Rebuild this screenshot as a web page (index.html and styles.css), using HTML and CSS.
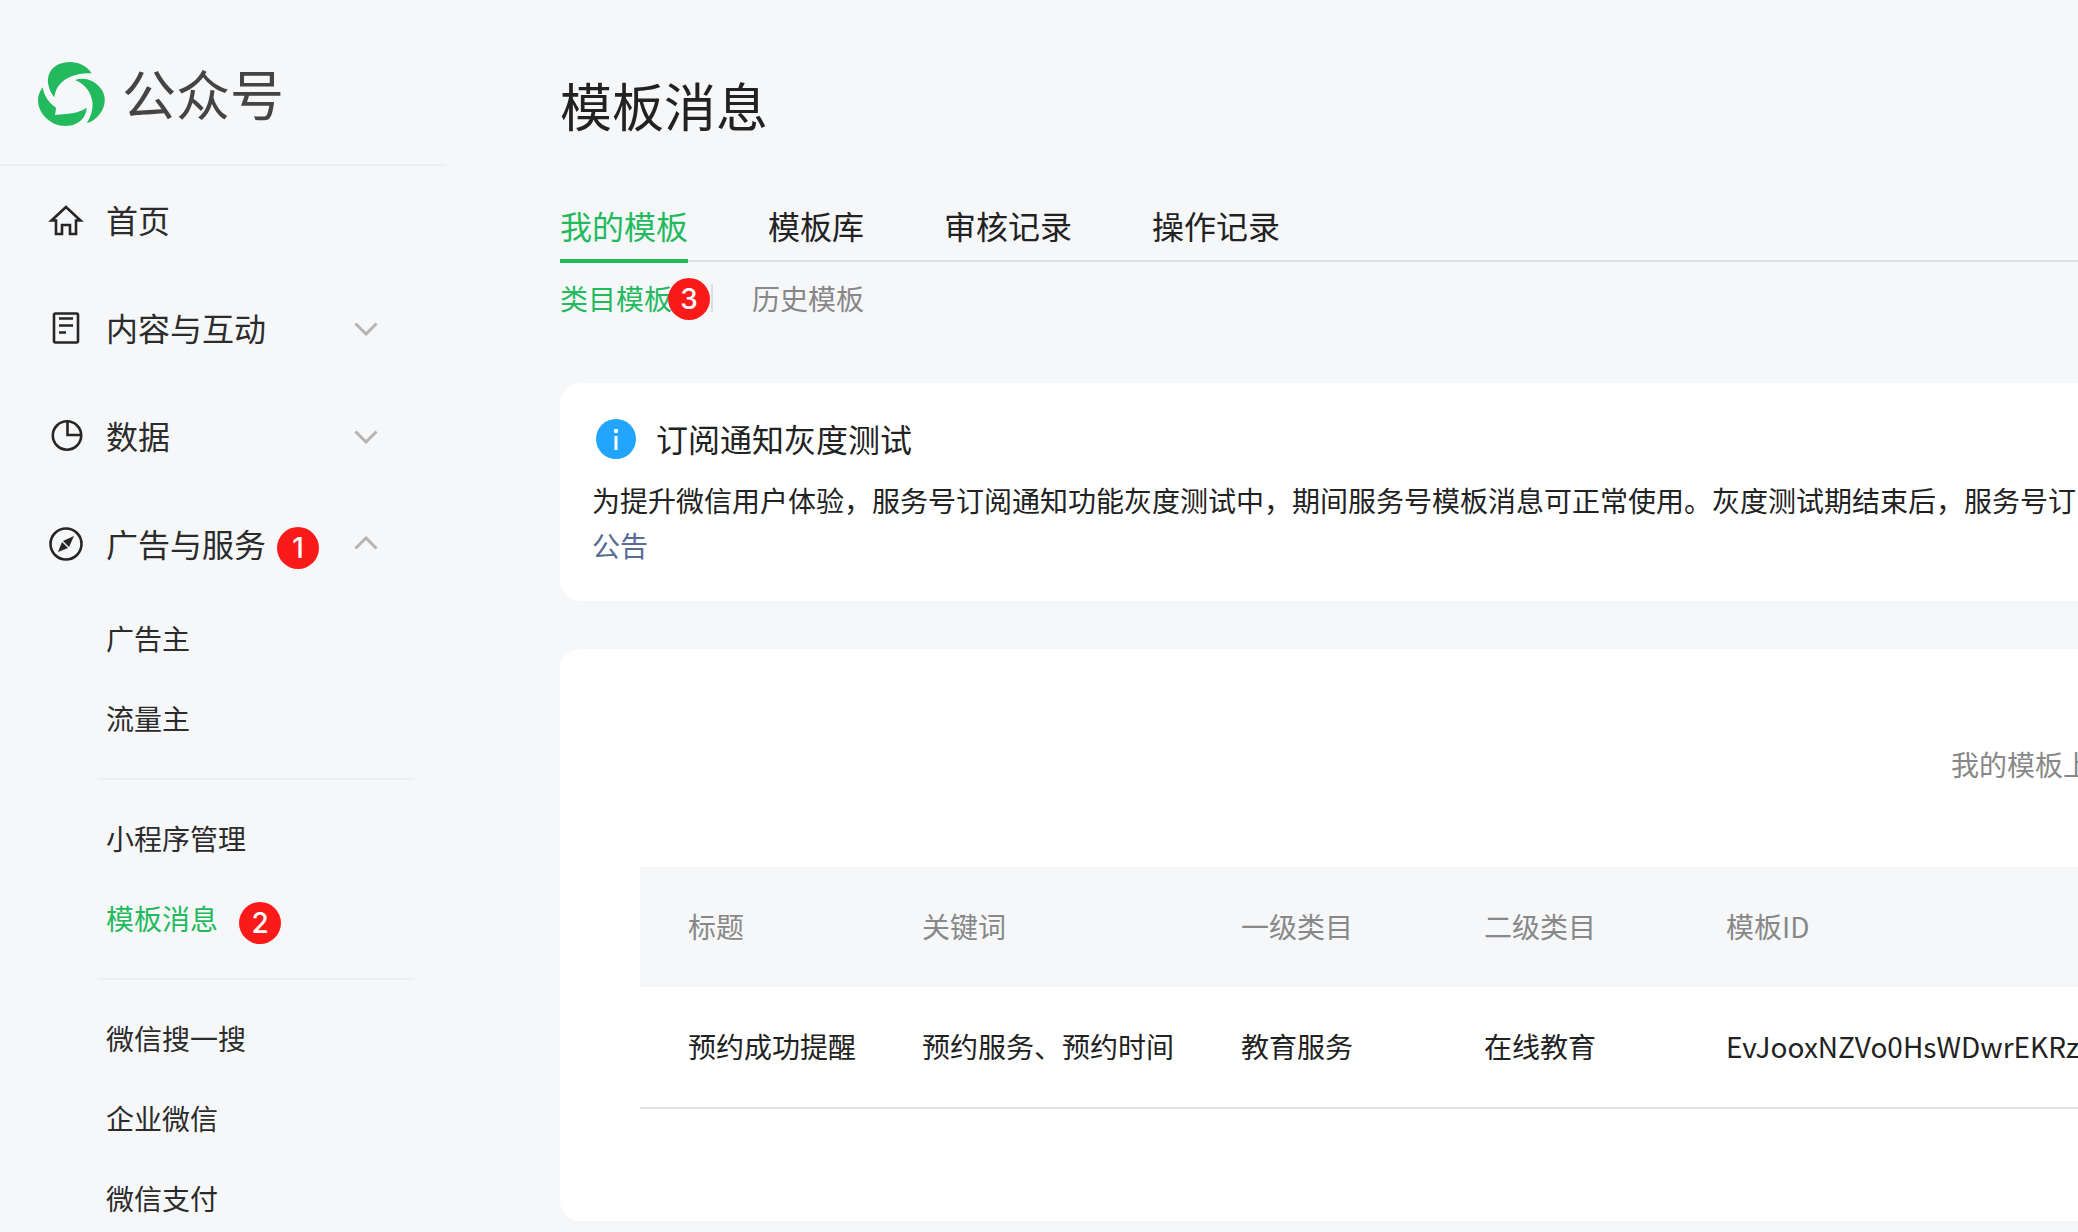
FILE: index.html
```html
<!DOCTYPE html>
<html lang="zh-CN">
<head>
<meta charset="utf-8">
<title>模板消息</title>
<link rel="stylesheet" href="styles.css">
</head>
<body>
<div class="app">
  <aside class="sidebar">
    <div class="brand">
      <svg class="logo" viewBox="0 0 67 64">
        <path d="M53.7 11.3C48.5 3.5 40 0 32 0C23.5 0 15.5 3.5 12 10C8 17.5 10 27.5 16.3 35.3C17 29.5 19 25 23 21C28.5 15.5 39 10.5 53.7 11.3Z"/>
        <path d="M37 18C43.5 15.5 51 16.5 56.5 20.5C63 25 66.8 31 66.8 38C66.8 48.5 58.5 58.5 48.7 61.3C52.5 55 55 48 54.5 41C53.8 31.5 47.5 22 37 18Z"/>
        <path d="M4.7 25.3C1.5 29.5 0 33.5 0 38C0 45 3 51 8 56C13 61 20 64 27 64C35 64 42 60.5 45.5 55.5C47.5 52.5 48.5 49 48.7 45.7C44.5 48.5 39.5 50.5 34 51.3C28 52.2 22.5 52.5 17 53C17.5 50.5 18 48 18 45.7C11 41 6 34 4.7 25.3Z"/>
      </svg>
      <span class="brand-name">公众号</span>
    </div>
    <nav class="nav">
      <div class="nav-row">
        <svg class="nav-icon" viewBox="0 0 40 40"><path d="M20 6L5.5 19.5H10V33H16V24H24V33H30V19.5H34.5Z"/></svg>
        <span class="nav-label">首页</span>
      </div>
      <div class="nav-row">
        <svg class="nav-icon" viewBox="0 0 40 40"><rect x="8" y="4.5" width="24" height="29" rx="1.5"/><path d="M13 9.5H27M13 16.5H27M13 23.5H20"/></svg>
        <span class="nav-label">内容与互动</span>
        <svg class="chevron" viewBox="0 0 24 14"><path d="M1.5 1.5L12 12L22.5 1.5"/></svg>
      </div>
      <div class="nav-row">
        <svg class="nav-icon" viewBox="0 0 40 40"><circle cx="21" cy="18.5" r="14.2"/><path d="M21.5 4V18H36"/></svg>
        <span class="nav-label">数据</span>
        <svg class="chevron" viewBox="0 0 24 14"><path d="M1.5 1.5L12 12L22.5 1.5"/></svg>
      </div>
      <div class="nav-row">
        <svg class="nav-icon" viewBox="0 0 40 40"><circle cx="20" cy="19" r="15.5"/><path class="needle" d="M28 11L17 16L23 22Z"/><path class="needle" d="M12 27L16 17L22 23Z"/></svg>
        <span class="nav-label">广告与服务</span>
        <span class="badge badge-nav">1</span>
        <svg class="chevron chevron-up" viewBox="0 0 24 14"><path d="M1.5 12.5L12 2L22.5 12.5"/></svg>
      </div>
      <div class="sub-group first">
        <div class="sub-item">广告主</div>
        <div class="sub-item">流量主</div>
      </div>
      <div class="sub-group">
        <div class="sub-item">小程序管理</div>
        <div class="sub-item active">模板消息<span class="badge badge-sub">2</span></div>
      </div>
      <div class="sub-group last">
        <div class="sub-item">微信搜一搜</div>
        <div class="sub-item">企业微信</div>
        <div class="sub-item">微信支付</div>
      </div>
    </nav>
  </aside>
  <main class="main">
    <h1 class="page-title">模板消息</h1>
    <div class="tabs">
      <div class="tab active">我的模板</div>
      <div class="tab">模板库</div>
      <div class="tab">审核记录</div>
      <div class="tab">操作记录</div>
    </div>
    <div class="subtabs">
      <div class="subtab active">类目模板<span class="badge badge-tab">3</span></div>
      <div class="subtab">历史模板</div>
    </div>
    <section class="card notice">
      <div class="notice-head">
        <svg class="info" viewBox="0 0 40 40"><circle cx="20" cy="20" r="20"/><circle class="info-mark" cx="20" cy="12" r="2.2"/><rect class="info-mark" x="18.5" y="17" width="3" height="14"/></svg>
        <span class="notice-title">订阅通知灰度测试</span>
      </div>
      <p class="notice-text">为提升微信用户体验，服务号订阅通知功能灰度测试中，期间服务号模板消息可正常使用。灰度测试期结束后，服务号订阅通知将全面开放</p>
      <a class="notice-link">公告</a>
    </section>
    <section class="card list">
      <p class="quota">我的模板上限25个</p>
      <div class="table">
        <div class="tr th">
          <div>标题</div><div>关键词</div><div>一级类目</div><div>二级类目</div><div>模板ID</div>
        </div>
        <div class="tr td">
          <div>预约成功提醒</div><div>预约服务、预约时间</div><div>教育服务</div><div>在线教育</div><div>EvJooxNZVo0HsWDwrEKRz</div>
        </div>
      </div>
    </section>
  </main>
</div>
</body>
</html>
```

FILE: styles.css
```css
* { box-sizing: border-box; }
html, body { margin: 0; padding: 0; height: 100%; overflow: hidden; }
body {
  background: #f6f7f9;
  color: #222;
  font-family: "Noto Sans CJK SC", "Inter", sans-serif;
  font-weight: 400;
}
.app { display: flex; width: 2078px; height: 1232px; overflow: hidden; }

/* sidebar */
.sidebar { width: 446px; flex: none; margin-right: 114px; }
.brand {
  display: flex; align-items: center; height: 166px; padding: 24px 0 0 38px;
  border-bottom: 2px solid #eeeff1;
}
.logo { width: 67px; height: 64px; fill: #23ba5d; flex: none; }
.brand-name { margin-left: 17px; padding-bottom: 3px; font-size: 54px; line-height: 64px; color: #444; }

.nav { padding-top: 1px; }
.nav-row {
  display: flex; align-items: center; height: 108px; padding: 0 68px 0 46px;
  font-size: 32px; color: #2b2b2b;
}
.nav-label { padding-bottom: 5px; }
.nav-icon {
  width: 40px; height: 40px; margin-right: 20px; flex: none;
  fill: none; stroke: #262626; stroke-width: 2.6;
}
.needle { fill: #262626; stroke: none; }
.chevron { width: 24px; height: 14px; margin-left: auto; fill: none; stroke: #b4b4b4; stroke-width: 3; flex: none; }
.chevron-up { margin-bottom: 5px; }

.badge {
  display: flex; align-items: center; justify-content: center;
  width: 42px; height: 42px; border-radius: 50%;
  background: #fb1a1a; color: #fff;
  font-family: "Inter", sans-serif; font-weight: 500; font-size: 28px; line-height: 1;
  flex: none;
}
.badge-nav { margin: 6px 0 0 11px; }
.sub-group { margin-left: 98px; width: 316px; padding: 19px 0; border-bottom: 2px solid #eeeff1; }
.sub-group.first { padding-top: 0; }
.sub-group.last { border-bottom: 0; }
.sub-item {
  display: flex; align-items: center; height: 80px; margin-left: 8px; padding-bottom: 2px;
  font-size: 28px; color: #2b2b2b;
}
.sub-item.active { color: #23ba5d; }
.badge-sub { margin: 10px 0 0 21px; }

/* main */
.main { width: 1700px; flex: none; }
.page-title { margin: 0; padding-top: 69px; font-size: 52px; line-height: 72px; font-weight: 400; color: #222; }
.tabs { display: flex; gap: 80px; margin-top: 61px; height: 60px; border-bottom: 2px solid #dedfe2; }
.tab { font-size: 32px; line-height: 46px; height: 61px; color: #222; }
.tab.active { color: #23ba5d; border-bottom: 4px solid #23ba5d; }
.subtabs { display: flex; align-items: center; height: 72px; font-size: 28px; color: #888; }
.subtab { position: relative; line-height: 28px; }
.subtab.active { color: #23ba5d; padding-right: 39px; margin-right: 39px; border-right: 2px solid #dedfe2; }
.badge-tab { position: absolute; left: 108px; top: -6px; }

.card { background: #fff; border-radius: 20px; box-shadow: 0 2px 12px rgba(0, 0, 0, 0.012); }
.notice { margin-top: 49px; height: 218px; padding: 36px 0 0 32px; }
.notice-head { display: flex; align-items: center; gap: 20px; margin-left: 4px; height: 40px; font-size: 32px; color: #222; }
.notice-title { padding-bottom: 3px; }
.info { width: 40px; height: 40px; fill: #22a5ff; flex: none; }
.info-mark { fill: #fff; }
.notice-text { margin: 19px 0 0; font-size: 28px; line-height: 45px; white-space: nowrap; color: #222; }
.notice-link { display: block; font-size: 28px; line-height: 45px; color: #576b95; }

.list { margin-top: 48px; height: 572px; padding-top: 95px; }
.quota { margin: 0 0 83px 1391px; font-size: 28px; line-height: 40px; color: #888; white-space: nowrap; }
.table { margin-left: 80px; }
.tr { display: grid; grid-template-columns: 234px 319px 243px 242px 1fr; align-items: center; font-size: 28px; }
.tr > div { padding-left: 48px; white-space: nowrap; }
.th { height: 120px; background: #f6f7f9; color: #888; }
.th > div { padding-bottom: 3px; }
.td { height: 122px; color: #222; border-bottom: 2px solid #e2e2e2; }
.td > div { padding-bottom: 3px; }
```
